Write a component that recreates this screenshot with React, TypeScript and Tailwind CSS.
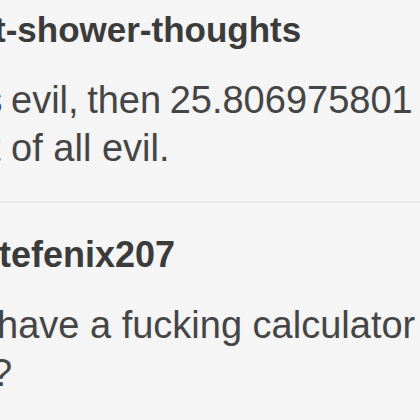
export default function App() {
  return (
    <div className="w-[420px] h-[420px] overflow-hidden bg-[#f5f5f5] text-[#454545] font-['Liberation_Sans',Arial,sans-serif]">
      <div className="flex flex-col">
        {/* post header */}
        <div className="pt-[10px] whitespace-nowrap text-[35px] leading-[40px] font-bold text-[#3b3b3b] -ml-[6px]">
          t-shower-thoughts
        </div>

        {/* post body */}
        <div className="mt-[26px] whitespace-nowrap text-[38px] leading-[48px]">
          <div className="-ml-[25px] [word-spacing:-2px]">is evil, then 25.806975801</div>
          <div className="-ml-[10px]">t of all evil.</div>
        </div>

        {/* separator */}
        <div className="mt-[29px] h-[2px] bg-[#ebebeb]" />

        {/* reply */}
        <div className="mt-[32px] whitespace-nowrap text-[36px] leading-[40px] font-bold text-[#3b3b3b] -ml-[1px]">
          tefenix207
        </div>
        <div className="mt-[26px] whitespace-nowrap text-[38px] leading-[48px]">
          <div className="-ml-[3px]">have a fucking calculator</div>
          <div className="-ml-[9px]">?</div>
        </div>
      </div>
    </div>
  );
}
